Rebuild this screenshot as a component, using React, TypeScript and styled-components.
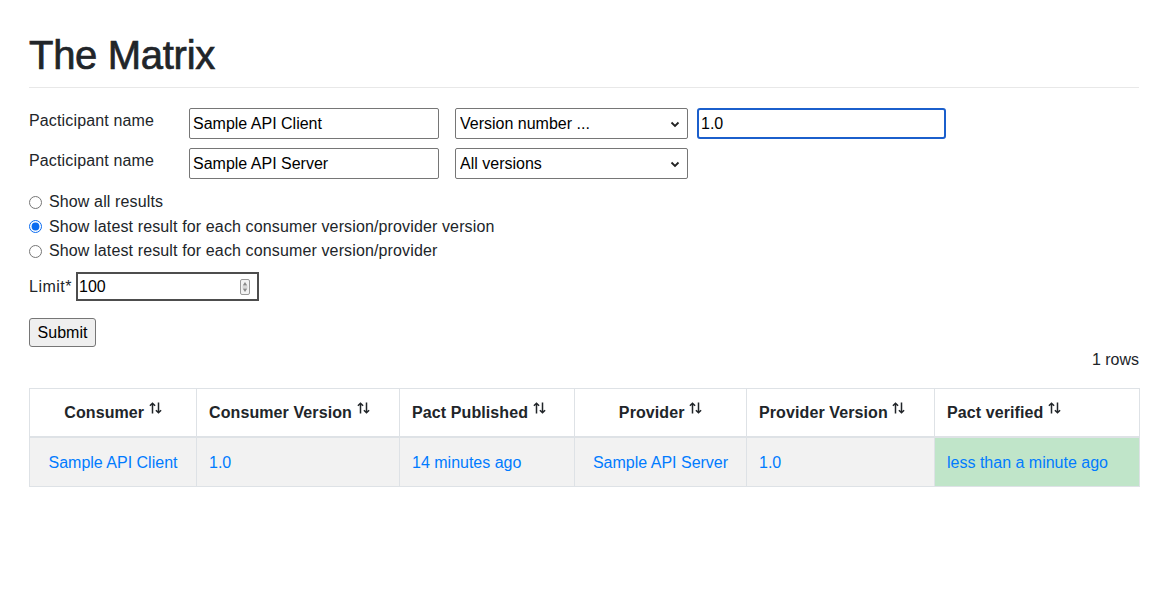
import styled, { createGlobalStyle } from 'styled-components';

const GlobalStyle = createGlobalStyle`
  body {
    margin: 0;
    background: #fff;
    color: #212529;
    font-family: "Liberation Sans", Arial, sans-serif;
    font-size: 16px;
    line-height: 24px;
  }
  * {
    box-sizing: border-box;
  }
`;

const columns = [
  { title: 'Consumer', width: 167, center: true },
  { title: 'Consumer Version', width: 203 },
  { title: 'Pact Published', width: 175 },
  { title: 'Provider', width: 172, center: true },
  { title: 'Provider Version', width: 188 },
  { title: 'Pact verified', width: 205 },
];

const row = [
  'Sample API Client',
  '1.0',
  '14 minutes ago',
  'Sample API Server',
  '1.0',
  'less than a minute ago',
];

const radios = [
  { label: 'Show all results', checked: false },
  { label: 'Show latest result for each consumer version/provider version', checked: true },
  { label: 'Show latest result for each consumer version/provider', checked: false },
];

const SortIcon = () => (
  <SortSvg width="13" height="12" viewBox="0 0 13 12" fill="none" stroke="#212529" strokeWidth="1.5">
    <path d="M3.5 11.5V1.2M0.9 3.8l2.6-2.6 2.6 2.6" />
    <path d="M9.5 0.5v10.3M6.9 8.2l2.6 2.6 2.6-2.6" />
  </SortSvg>
);

const Chevron = () => (
  <svg width="10" height="10" viewBox="0 0 10 10" fill="none" stroke="#222" strokeWidth="1.8">
    <path d="M1.5 3.5L5 7l3.5-3.5" />
  </svg>
);

const Spinner = () => (
  <svg width="10" height="16" viewBox="0 0 10 16">
    <rect x="0.5" y="0.5" width="9" height="15" rx="1.5" fill="#f2f2f2" stroke="#9a9a9a" />
    <path d="M5 3L7.3 6.5H2.7Z" fill="#8a8a8a" />
    <path d="M5 13L7.3 9.5H2.7Z" fill="#8a8a8a" />
    <rect x="2.5" y="7.5" width="5" height="1" fill="#bbb" />
  </svg>
);

const App = () => {
  return (
    <>
      <GlobalStyle />
      <Page>
        <Title>The Matrix</Title>
        <Rule />
        <FieldRow>
          <FieldLabel>Pacticipant name</FieldLabel>
          <NameInput defaultValue="Sample API Client" />
          <SelectBox $offset={16}>
            <Select defaultValue="number">
              <option value="number">Version number ...</option>
              <option value="all">All versions</option>
            </Select>
            <Chevron />
          </SelectBox>
          <VersionInput defaultValue="1.0" $focused />
        </FieldRow>
        <FieldRow>
          <FieldLabel>Pacticipant name</FieldLabel>
          <NameInput defaultValue="Sample API Server" />
          <SelectBox $offset={16}>
            <Select defaultValue="all">
              <option value="number">Version number ...</option>
              <option value="all">All versions</option>
            </Select>
            <Chevron />
          </SelectBox>
        </FieldRow>

        <RadioGroup>
          {radios.map((r) => (
            <RadioLine key={r.label}>
              <Radio type="radio" name="latestby" defaultChecked={r.checked} />
              {r.label}
            </RadioLine>
          ))}
        </RadioGroup>

        <LimitRow>
          <LimitLabel>Limit*</LimitLabel>
          <LimitBox>
            <LimitInput defaultValue="100" />
            <Spinner />
          </LimitBox>
        </LimitRow>

        <SubmitButton type="button">Submit</SubmitButton>

        <RowCount>1 rows</RowCount>

        <Table>
          <thead>
            <tr>
              {columns.map((c) => (
                <HeadCell key={c.title} $width={c.width} $center={c.center}>
                  {c.title} <SortIcon />
                </HeadCell>
              ))}
            </tr>
          </thead>
          <tbody>
            <tr>
              {row.map((value, i) => (
                <BodyCell key={i} $center={columns[i].center} $success={i === row.length - 1}>
                  <CellLink href="#">{value}</CellLink>
                </BodyCell>
              ))}
            </tr>
          </tbody>
        </Table>
      </Page>
    </>
  );
};

const Page = styled.div`
  width: 1110px;
  margin: 0 0 0 29px;
  padding-bottom: 40px;
`;

const Title = styled.h1`
  margin: 31px 0 8px;
  font-size: 40px;
  line-height: 48px;
  font-weight: 500;
  letter-spacing: -0.3px;
  -webkit-text-stroke: 0.7px #212529;
`;

const Rule = styled.hr`
  margin: 0 0 20px;
  border: 0;
  border-top: 1px solid #e8e8e8;
`;

const FieldRow = styled.div`
  display: flex;
  align-items: flex-start;
  margin-bottom: 9px;
`;

const FieldLabel = styled.label`
  width: 160px;
  flex-shrink: 0;
  margin-top: 1px;
  line-height: 24px;
  letter-spacing: 0.15px;
`;

const TextField = styled.input`
  height: 31px;
  padding: 1px 3px 0;
  font: inherit;
  color: #000;
  background: #fff;
  border: 1px solid #767676;
  border-radius: 2px;
  outline: none;
`;

const NameInput = styled(TextField)`
  width: 250px;
`;

const VersionInput = styled(TextField)<{ $focused?: boolean }>`
  width: 249px;
  margin-left: 9px;
  padding-left: 2px;
  border: ${(p) => (p.$focused ? '2px solid #1b5fcc' : '1px solid #767676')};
  border-radius: 3px;
`;

const SelectBox = styled.div<{ $offset: number }>`
  display: flex;
  align-items: center;
  width: 233px;
  height: 31px;
  margin-left: ${(p) => p.$offset}px;
  padding-right: 7px;
  border: 1px solid #767676;
  border-radius: 2px;
  background: #fff;
`;

const Select = styled.select`
  flex: 1;
  height: 100%;
  padding: 1px 4px 0;
  appearance: none;
  border: 0;
  outline: none;
  background: transparent;
  font: inherit;
  color: #000;
`;

const RadioGroup = styled.div`
  display: flex;
  flex-direction: column;
  margin-top: 11px;
  gap: 0.5px;
`;

const RadioLine = styled.label`
  display: flex;
  align-items: center;
  line-height: 24px;
  letter-spacing: 0.13px;
`;

const Radio = styled.input`
  width: 13px;
  height: 13px;
  margin: 0 7px 0 0;
  accent-color: #0b6cf0;
`;

const LimitRow = styled.div`
  display: flex;
  align-items: center;
  gap: 4px;
  margin-top: 9px;
`;

const LimitLabel = styled.span`
  letter-spacing: 0.5px;
  padding-top: 1px;
`;

const LimitBox = styled.div`
  display: flex;
  align-items: center;
  width: 183px;
  height: 29px;
  padding-right: 7px;
  border: 2px solid #4d4d4d;
  background: #fff;
`;

const LimitInput = styled.input`
  flex: 1;
  min-width: 0;
  height: 100%;
  padding: 1px 1px 0;
  border: 0;
  outline: none;
  font: inherit;
  color: #000;
  background: transparent;
`;

const SubmitButton = styled.button`
  display: block;
  margin-top: 17px;
  width: 67px;
  height: 29px;
  padding: 1px 0 0;
  font: inherit;
  color: #000;
  background: #efefef;
  border: 1px solid #767676;
  border-radius: 3px;
`;

const RowCount = styled.div`
  margin-top: 1px;
  text-align: right;
  line-height: 24px;
`;

const Table = styled.table`
  width: 1110px;
  margin-top: 16px;
  border-collapse: collapse;
  table-layout: fixed;
`;

const HeadCell = styled.th<{ $width: number; $center?: boolean }>`
  width: ${(p) => p.$width}px;
  padding: 12px 12px 11px;
  text-align: ${(p) => (p.$center ? 'center' : 'left')};
  font-weight: 700;
  line-height: 24px;
  letter-spacing: 0.1px;
  border: 1px solid #dee2e6;
  border-bottom: 2px solid #dee2e6;
  white-space: nowrap;
`;

const SortSvg = styled.svg`
  vertical-align: 4px;
`;

const BodyCell = styled.td<{ $center?: boolean; $success?: boolean }>`
  padding: 13px 12px 11px;
  text-align: ${(p) => (p.$center ? 'center' : 'left')};
  line-height: 24px;
  background: ${(p) => (p.$success ? '#c0e5c9' : '#f2f2f2')};
  border: 1px solid #dee2e6;
  white-space: nowrap;
`;

const CellLink = styled.a`
  color: #007bff;
  text-decoration: none;
`;

export default App;
